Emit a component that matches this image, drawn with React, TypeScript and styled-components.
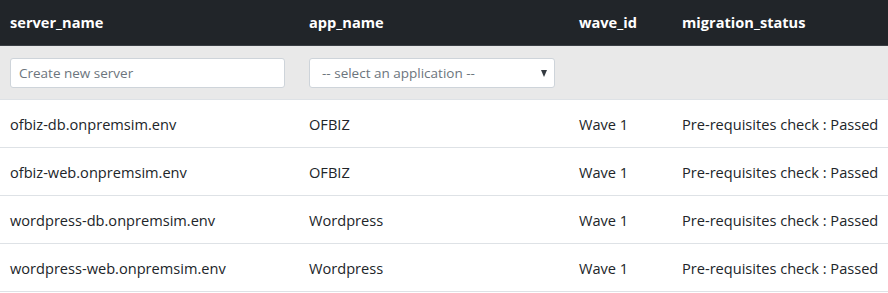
import * as React from 'react'
import styled, { createGlobalStyle } from 'styled-components'

const GlobalStyle = createGlobalStyle`
  body {
    margin: 0;
    background: #fff;
    font-family: 'Open Sans', 'Noto Sans', sans-serif;
    color: #212529;
  }
`

interface ServerRow {
  server: string
  app: string
  wave: string
  status: string
}

const rows: ServerRow[] = [
  { server: 'ofbiz-db.onpremsim.env', app: 'OFBIZ', wave: 'Wave 1', status: 'Pre-requisites check : Passed' },
  { server: 'ofbiz-web.onpremsim.env', app: 'OFBIZ', wave: 'Wave 1', status: 'Pre-requisites check : Passed' },
  { server: 'wordpress-db.onpremsim.env', app: 'Wordpress', wave: 'Wave 1', status: 'Pre-requisites check : Passed' },
  { server: 'wordpress-web.onpremsim.env', app: 'Wordpress', wave: 'Wave 1', status: 'Pre-requisites check : Passed' }
]

const Table = styled.table`
  width: 100%;
  border-collapse: collapse;
  table-layout: fixed;
  font-size: 14.6px;
  line-height: 24px;
`

const Col = styled.col<{ width: number }>`
  width: ${props => props.width}px;
`

const HeadCell = styled.th`
  background: #212529;
  color: #fff;
  font-weight: 700;
  text-align: left;
  padding: 10px 10px 11px;
  border-bottom: 1px solid #3a3f44;
  white-space: nowrap;
`

const FilterRow = styled.tr`
  background: #e9e9e9;
`

const FilterCell = styled.td`
  padding: 12px 10px 11px 10px;
  border-bottom: 1px solid #dee2e6;
  height: 30px;
  vertical-align: top;
`

const TextInput = styled.input`
  display: block;
  box-sizing: border-box;
  width: 275px;
  height: 30px;
  margin: 0;
  padding: 0 8px;
  border: 1px solid #ced4da;
  border-radius: 3px;
  background: #fff;
  font-family: inherit;
  font-size: 13.5px;
  color: #495057;
  outline: none;

  &::placeholder {
    color: #6c757d;
  }
`

const SelectBox = styled.div`
  box-sizing: border-box;
  width: 246px;
  height: 30px;
  padding: 0 7px 0 12px;
  border: 1px solid #ced4da;
  border-radius: 3px;
  background: #fff;
  display: flex;
  align-items: center;
  justify-content: space-between;
  font-size: 13.5px;
  color: #6c757d;
`

const Caret = styled.span`
  width: 0;
  height: 0;
  border-left: 3.5px solid transparent;
  border-right: 3.5px solid transparent;
  border-top: 7px solid #343a40;
`

const BodyCell = styled.td`
  height: 24px;
  padding: 12px 10px 11px;
  border-bottom: 1px solid #dee2e6;
  white-space: nowrap;
  vertical-align: top;
`

export default function App() {
  return (
    <React.Fragment>
      <GlobalStyle />
      <Table>
        <colgroup>
          <Col width={299} />
          <Col width={270} />
          <Col width={103} />
          <Col width={216} />
        </colgroup>
        <thead>
          <tr>
            <HeadCell>server_name</HeadCell>
            <HeadCell>app_name</HeadCell>
            <HeadCell>wave_id</HeadCell>
            <HeadCell>migration_status</HeadCell>
          </tr>
        </thead>
        <tbody>
          <FilterRow>
            <FilterCell>
              <TextInput placeholder="Create new server" />
            </FilterCell>
            <FilterCell>
              <SelectBox>
                <span>-- select an application --</span>
                <Caret />
              </SelectBox>
            </FilterCell>
            <FilterCell />
            <FilterCell />
          </FilterRow>
          {rows.map(row => (
            <tr key={row.server}>
              <BodyCell>{row.server}</BodyCell>
              <BodyCell>{row.app}</BodyCell>
              <BodyCell>{row.wave}</BodyCell>
              <BodyCell>{row.status}</BodyCell>
            </tr>
          ))}
        </tbody>
      </Table>
    </React.Fragment>
  )
}
